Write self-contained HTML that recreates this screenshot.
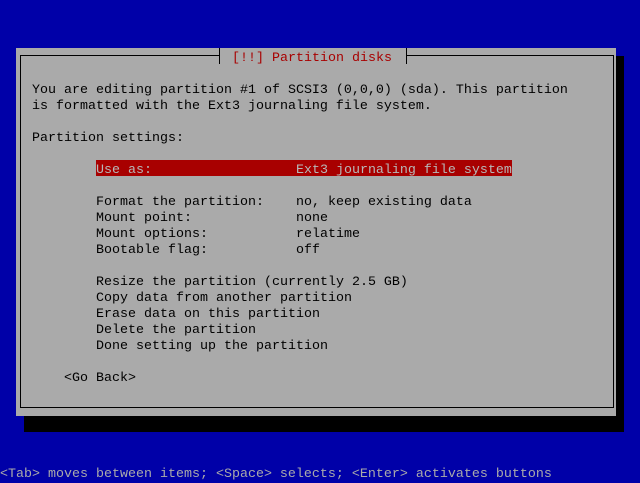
<!DOCTYPE html>
<html><head><meta charset="utf-8"><style>
html,body{margin:0;padding:0;}
body{width:640px;height:480px;background:#0000a8;position:relative;overflow:hidden;
font-family:"Liberation Mono","DejaVu Sans Mono",monospace;font-size:13.33px;line-height:16px;}
.a{position:absolute;white-space:pre;height:13px;padding-top:3px;line-height:16px;}
.t{color:#000;}
</style></head><body>
<div style="position:absolute;left:24px;top:56px;width:600px;height:376px;background:#000"></div>
<div style="position:absolute;left:16px;top:48px;width:600px;height:368px;background:#aaaaaa"></div>
<div style="position:absolute;left:20px;top:55px;width:592px;height:351px;border:1px solid #000;border-top:1px solid #000"></div>
<div style="position:absolute;left:219px;top:48px;width:186px;height:16px;background:#aaaaaa;border-left:1px solid #000;border-right:1px solid #000"></div>
<div class="a" style="left:232px;top:48px;color:#a80000">[!!] Partition disks</div>
<div class="a t" style="left:32px;top:80px">You are editing partition #1 of SCSI3 (0,0,0) (sda). This partition</div>
<div class="a t" style="left:32px;top:96px">is formatted with the Ext3 journaling file system.</div>
<div class="a t" style="left:32px;top:128px">Partition settings:</div>
<div class="a" style="left:96px;top:160px;width:416px;background:#a80000;color:#b8b8b8">Use as:                  Ext3 journaling file system</div>
<div class="a t" style="left:96px;top:192px">Format the partition:    no, keep existing data</div>
<div class="a t" style="left:96px;top:208px">Mount point:             none</div>
<div class="a t" style="left:96px;top:224px">Mount options:           relatime</div>
<div class="a t" style="left:96px;top:240px">Bootable flag:           off</div>
<div class="a t" style="left:96px;top:272px">Resize the partition (currently 2.5 GB)</div>
<div class="a t" style="left:96px;top:288px">Copy data from another partition</div>
<div class="a t" style="left:96px;top:304px">Erase data on this partition</div>
<div class="a t" style="left:96px;top:320px">Delete the partition</div>
<div class="a t" style="left:96px;top:336px">Done setting up the partition</div>
<div class="a t" style="left:64px;top:368px">&lt;Go Back&gt;</div>
<div class="a" style="left:0px;top:464px;color:#aaaaaa">&lt;Tab&gt; moves between items; &lt;Space&gt; selects; &lt;Enter&gt; activates buttons</div>
</body></html>
